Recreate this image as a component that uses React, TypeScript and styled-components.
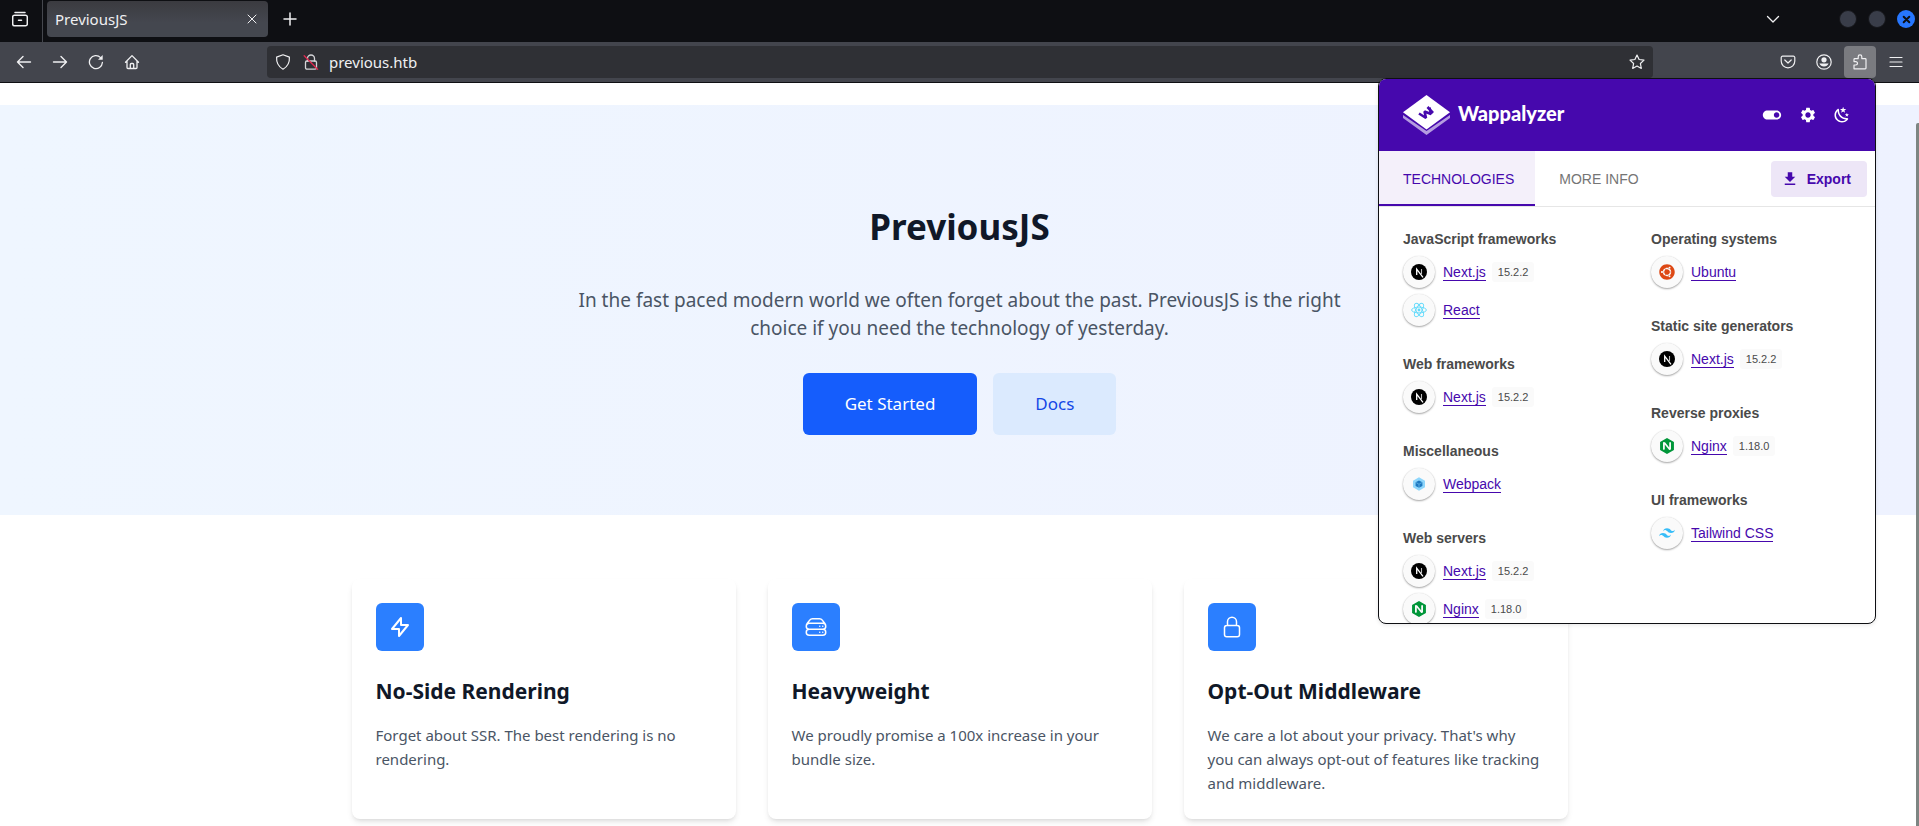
import React from "react";
import styled, { createGlobalStyle } from "styled-components";
import { FaUbuntu } from "react-icons/fa";
import { SiNginx, SiTailwindcss } from "react-icons/si";
import { MdSettings, MdToggleOn } from "react-icons/md";

const uiFont = `"Noto Sans", "Open Sans", sans-serif`;
const popupFont = `"Liberation Sans", Arial, sans-serif`;
const purple = "#4608ad";

const GlobalStyle = createGlobalStyle`
  *, *::before, *::after { box-sizing: border-box; }
  body { margin: 0; background: #fff; font-family: ${uiFont}; }
  h1, h2, h3, p, ul { margin: 0; padding: 0; }
  button, input { font: inherit; color: inherit; border: 0; background: none; padding: 0; margin: 0; }
  svg { display: block; flex: none; }
`;

const Window = styled.div`
  position: relative;
  display: flex;
  flex-direction: column;
  height: 100vh;
  overflow: hidden;
`;

/* ---- browser chrome ---- */

const TabStrip = styled.div`
  display: flex;
  align-items: center;
  flex: none;
  height: 42px;
  background: #0e0f13;
  color: #f0f0f2;
`;

const TabsOverview = styled.button`
  display: flex;
  align-items: center;
  justify-content: center;
  width: 43px;
  height: 42px;
  padding: 0 3px 4px 0;
  border-right: 1px solid #45474e;
`;

const BrowserTab = styled.div`
  display: flex;
  align-items: center;
  justify-content: space-between;
  width: 221px;
  height: 36px;
  margin: 0 6px 4px 4px;
  padding: 0 8px;
  border-radius: 4px;
  background: linear-gradient(#3b3b40, #44474f 60%);
  font-size: 15px;
`;

const IconButton = styled.button<{ $active?: boolean }>`
  display: flex;
  align-items: center;
  justify-content: center;
  width: 32px;
  height: 32px;
  border-radius: 4px;
  background: ${(p) => (p.$active ? "#7a7b80" : "none")};
`;

const NewTabButton = styled(IconButton)`
  margin-bottom: 4px;
`;

const SmallButton = styled.button`
  display: flex;
  align-items: center;
  justify-content: center;
  width: 16px;
  height: 16px;
`;

const WindowControls = styled.div`
  display: flex;
  align-items: center;
  gap: 11px;
  margin-left: auto;
  padding: 0 4px 4px 0;
`;

const TabList = styled(IconButton)`
  margin-right: 39px;
`;

const WindowDot = styled.button<{ $close?: boolean }>`
  display: flex;
  align-items: center;
  justify-content: center;
  width: 18px;
  height: 18px;
  border-radius: 50%;
  border: ${(p) => (p.$close ? "0" : "1px solid #16171b")};
  background: ${(p) => (p.$close ? "#2777ff" : "#393d49")};
  color: #0e0f13;
`;

const Toolbar = styled.div`
  display: flex;
  align-items: center;
  flex: none;
  height: 41px;
  padding: 0 7px 0 8px;
  border-bottom: 1px solid #0e0f13;
  background: #43454d;
  color: #f0f0f2;
`;

const NavGroup = styled.div`
  display: flex;
  gap: 4px;
`;

const UrlBar = styled.div`
  display: flex;
  align-items: center;
  flex: 1;
  height: 32px;
  margin: 0 119px;
  padding: 0 8px;
  border-radius: 4px;
  background: #2f3035;
`;

const Badges = styled.div`
  display: flex;
  gap: 12px;
  margin-right: 10px;
`;

const UrlInput = styled.input`
  flex: 1;
  min-width: 0;
  font-size: 15px;
  outline: none;
`;

/* ---- web page ---- */

const Page = styled.main`
  position: relative;
  flex: 1;
  min-height: 0;
  overflow: hidden;
  padding-top: 22px;
  background: #fff;
`;

const PageScrollbar = styled.div`
  position: absolute;
  top: 40px;
  right: 0;
  bottom: 0;
  width: 3px;
  border-radius: 2px 0 0 0;
  background: #7d8582;
`;

const Hero = styled.section`
  display: flex;
  flex-direction: column;
  align-items: center;
  padding: 104px 16px 80px;
  background: linear-gradient(to right, #eff6ff, #eef2ff);
  text-align: center;
`;

const HeroTitle = styled.h1`
  font-size: 35px;
  line-height: 36px;
  font-weight: 700;
  color: #101828;
`;

const HeroText = styled.p`
  max-width: 768px;
  margin: 41px 0 31px;
  font-size: 19px;
  line-height: 28px;
  color: #4a5565;
`;

const HeroActions = styled.div`
  display: flex;
  gap: 16px;
`;

const HeroButton = styled.a<{ $primary?: boolean }>`
  padding: 17px 42px;
  border-radius: 6px;
  background: ${(p) => (p.$primary ? "#155dfc" : "#dbeafe")};
  color: ${(p) => (p.$primary ? "#fff" : "#1447e6")};
  font-size: 17px;
  line-height: 28px;
  text-decoration: none;
`;

const Features = styled.section`
  display: grid;
  grid-template-columns: repeat(3, 1fr);
  gap: 32px;
  max-width: 1216px;
  margin: 0 auto;
  padding: 64px 0;
`;

const Card = styled.article`
  padding: 24px;
  border-radius: 8px;
  background: #fff;
  box-shadow: 0 4px 6px -1px rgba(0, 0, 0, 0.1), 0 2px 4px -2px rgba(0, 0, 0, 0.1);
`;

const CardIcon = styled.div`
  display: flex;
  align-items: center;
  justify-content: center;
  width: 48px;
  height: 48px;
  margin-bottom: 24px;
  border-radius: 6px;
  background: #2b7fff;
  color: #fff;
`;

const CardTitle = styled.h2`
  margin-bottom: 16px;
  font-size: 21px;
  line-height: 32px;
  font-weight: 700;
  color: #101828;
`;

const CardText = styled.p`
  font-size: 15px;
  line-height: 24px;
  color: #4a5565;
`;

/* ---- Wappalyzer popup ---- */

const Popup = styled.aside`
  position: absolute;
  top: 78px;
  right: 43px;
  display: flex;
  flex-direction: column;
  width: 498px;
  height: 546px;
  overflow: hidden;
  border: 1px solid #0e0f13;
  border-radius: 8px;
  background: #fff;
  box-shadow: 0 1px 4px rgba(0, 0, 0, 0.1);
  font-family: ${popupFont};
`;

const PopupHeader = styled.header`
  display: flex;
  align-items: center;
  justify-content: space-between;
  flex: none;
  height: 72px;
  padding: 0 24px;
  background: ${purple};
  color: #fff;
`;

const Brand = styled.div`
  display: flex;
  align-items: center;
  gap: 8px;
`;

const BrandName = styled.span`
  padding-bottom: 4px;
  font-family: Lato, sans-serif;
  font-size: 20px;
  line-height: 24px;
  font-weight: 900;
`;

const HeaderActions = styled.div`
  display: flex;
  gap: 16px;
`;

const HeaderButton = styled.button`
  display: flex;
  align-items: center;
  justify-content: center;
  min-width: 16px;
  height: 22px;
`;

const PopupTabs = styled.div`
  display: flex;
  flex: none;
  height: 56px;
  padding-right: 8px;
  border-bottom: 1px solid #e6e6e6;
`;

const PopupTab = styled.button<{ $active?: boolean }>`
  padding: 2px 21px 0 24px;
  border-bottom: 2px solid ${(p) => (p.$active ? purple : "transparent")};
  background: ${(p) => (p.$active ? "#f4f0fa" : "none")};
  color: ${(p) => (p.$active ? purple : "#757575")};
  font-size: 14px;
`;

const ExportButton = styled.button`
  display: flex;
  align-items: center;
  gap: 8px;
  height: 36px;
  margin: 10px 0 0 auto;
  padding: 0 16px 0 10px;
  border-radius: 4px;
  background: #ede6f7;
  color: ${purple};
  font-size: 14px;
  font-weight: 700;
`;

const TechColumns = styled.div`
  display: grid;
  grid-template-columns: 1fr 1fr;
  padding-top: 20px;
`;

const TechColumn = styled.div`
  display: flex;
  flex-direction: column;
  gap: 23px;
  padding-left: 24px;
`;

const Category = styled.h3`
  margin-bottom: 2px;
  font-size: 14px;
  line-height: 24px;
  font-weight: 700;
  color: #4a4a4a;
`;

const TechRow = styled.div`
  display: flex;
  align-items: center;
  height: 38px;
`;

const TechIcon = styled.span`
  display: flex;
  align-items: center;
  justify-content: center;
  width: 32px;
  height: 32px;
  margin-right: 8px;
  border-radius: 50%;
  background: #fafafa;
  box-shadow: 0 1px 2px rgba(0, 0, 0, 0.35), 0 0 1px rgba(0, 0, 0, 0.12);
`;

const TechLink = styled.a`
  border-bottom: 1px solid ${purple};
  color: ${purple};
  font-size: 14px;
  line-height: 16px;
  text-decoration: none;
`;

const Version = styled.span`
  margin-left: 6px;
  padding: 0 6px;
  border-radius: 3px;
  background: #fafafa;
  color: #4a4a4a;
  font-size: 11px;
  line-height: 20px;
`;

/* ---- icons ---- */

const Line = ({ d, size = 16, width = 1.2, box = 16 }: { d: string; size?: number; width?: number; box?: number }) => (
  <svg width={size} height={size} viewBox={`0 0 ${box} ${box}`} fill="none" stroke="currentColor" strokeWidth={width} strokeLinecap="round" strokeLinejoin="round">
    <path d={d} />
  </svg>
);

const icons = {
  overview: "M3 1.5h10M2.5 4.2h11a1.8 1.8 0 0 1 1.8 1.8v7a1.8 1.8 0 0 1-1.8 1.8h-11A1.8 1.8 0 0 1 .7 13V6a1.8 1.8 0 0 1 1.8-1.8zM6.5 9.2h3",
  close: "M4 4l8 8M12 4l-8 8",
  plus: "M8 2v12M2 8h12",
  chevron: "M2.5 5.5L8 11l5.5-5.5",
  back: "M14.5 8h-13M7 2.5L1.5 8 7 13.5",
  forward: "M1.5 8h13M9 2.5L14.5 8 9 13.5",
  home: "M1.5 8.2L8 1.6l6.5 6.6M3 7v6.5a1 1 0 0 0 1 1h8a1 1 0 0 0 1-1V7M6.3 14.5v-4a1 1 0 0 1 1-1h1.4a1 1 0 0 1 1 1v4",
  shield: "M8 .8l6.4 2.3c.3 4.5-.9 9-6.4 12.1C2.5 12.1 1.3 7.6 1.6 3.1z",
  star: "M8 1l2.1 4.5 4.9.6-3.6 3.4.9 4.9L8 12l-4.3 2.4.9-4.9L1 6.1l4.9-.6z",
  pocket: "M2.6 2.2h10.8a1.4 1.4 0 0 1 1.4 1.4V7a6.8 6.8 0 0 1-13.6 0V3.6a1.4 1.4 0 0 1 1.4-1.4zM4.8 6L8 9l3.2-3",
  puzzle: "M2 14.8V11h1.8a1.7 1.7 0 0 0 0-3.4H2V5.4a.8.8 0 0 1 .8-.8h3.4V2.7a1.8 1.8 0 0 1 3.6 0v1.9h3.4a.8.8 0 0 1 .8.8v8.6a.8.8 0 0 1-.8.8z",
  menu: "M2 3.5h12M2 8h12M2 12.5h12",
};

const ReloadIcon = () => (
  <svg width="16" height="16" viewBox="0 0 16 16" fill="none" stroke="currentColor" strokeWidth="1.3" strokeLinecap="round">
    <path d="M14.4 8.5A6.5 6.5 0 1 1 12.6 3.6" />
    <path d="M10 5.8h4.7V1z" fill="currentColor" stroke="none" />
  </svg>
);

const InsecureLockIcon = () => (
  <svg width="16" height="16" viewBox="0 0 16 16" fill="none" strokeWidth="1.3" strokeLinecap="round">
    <rect x="2.5" y="7" width="11" height="8.2" rx="1.4" stroke="#d5d5d8" />
    <path d="M4.5 7V4.5a3.5 3.5 0 0 1 7 0V7" stroke="#d5d5d8" />
    <path d="M1.2 1.8L14.6 15.2" stroke="#e22850" />
  </svg>
);

const AccountIcon = () => (
  <svg width="16" height="16" viewBox="0 0 16 16" fill="none">
    <circle cx="8" cy="8" r="7.2" stroke="currentColor" strokeWidth="1.2" />
    <circle cx="8" cy="5.8" r="2.6" fill="currentColor" />
    <path d="M3.4 9.4h9.2a5 5 0 0 1-9.2 0z" fill="currentColor" />
  </svg>
);

const WappalyzerLogo = () => (
  <svg width="47" height="40" viewBox="0 0 47 40">
    <path d="M0 20v3l23.5 17L47 23v-3L23.5 36z" fill="#b59ce0" />
    <path d="M23.5 0L47 17.3 23.5 34.6 0 17.3z" fill="#fff" />
    <path d="M16 18.5l7 4.5-1.5-6.5 6.5 2.5-1.5-6.5M24.5 12l5.5 6" fill="none" stroke={purple} strokeWidth="2.6" strokeLinejoin="bevel" />
  </svg>
);

const MoonIcon = () => (
  <svg width="18" height="18" viewBox="0 0 24 24" fill="currentColor">
    <path d="M17.75,4.09L15.22,6.03L16.13,9.09L13.5,7.28L10.87,9.09L11.78,6.03L9.25,4.09L12.44,4L13.5,1L14.56,4L17.75,4.09M21.25,11L19.61,12.25L20.2,14.23L18.5,13.06L16.8,14.23L17.39,12.25L15.75,11L17.81,10.95L18.5,9L19.19,10.95L21.25,11M18.97,15.95C19.8,15.87 20.69,17.05 20.16,17.8C19.84,18.25 19.5,18.67 19.08,19.07C15.17,23 8.84,23 4.94,19.07C1.03,15.17 1.03,8.83 4.94,4.93C5.34,4.53 5.76,4.17 6.21,3.85C6.96,3.32 8.14,4.21 8.06,5.04C7.79,7.9 8.75,10.87 10.95,13.06C13.14,15.26 16.1,16.22 18.97,15.95M17.33,17.97C14.5,17.81 11.7,16.64 9.53,14.5C7.36,12.31 6.2,9.5 6.04,6.68C3.23,9.82 3.34,14.64 6.35,17.66C9.37,20.67 14.19,20.78 17.33,17.97Z" />
  </svg>
);

const DownloadIcon = () => (
  <svg width="18" height="18" viewBox="0 0 24 24" fill="currentColor">
    <path d="M5,20H19V18H5M19,9H15V3H9V9H5L12,16L19,9Z" />
  </svg>
);

const NextIcon = () => (
  <svg width="16" height="16" viewBox="0 0 16 16">
    <circle cx="8" cy="8" r="8" fill="#000" />
    <path d="M5.7 11V5.2l6.3 8.2" fill="none" stroke="#fff" strokeWidth="1.3" />
    <path d="M10.5 5v5" stroke="#bbb" strokeWidth="1.1" />
  </svg>
);

const ReactIcon = () => (
  <svg width="16" height="16" viewBox="0 0 16 16" fill="none" stroke="#61dafb" strokeWidth="0.9">
    <ellipse cx="8" cy="8" rx="7.4" ry="2.9" />
    <ellipse cx="8" cy="8" rx="7.4" ry="2.9" transform="rotate(60 8 8)" />
    <ellipse cx="8" cy="8" rx="7.4" ry="2.9" transform="rotate(120 8 8)" />
    <circle cx="8" cy="8" r="1.4" fill="#61dafb" stroke="none" />
  </svg>
);

const WebpackIcon = () => (
  <svg width="16" height="16" viewBox="0 0 16 16">
    <path d="M8 1.3l6 3.4v6.6l-6 3.4-6-3.4V4.7z" fill="#8ed6fb" />
    <path d="M8 4.4l3.4 1.9v3.6L8 11.8 4.6 9.9V6.3z" fill="#1c78c0" />
    <path d="M4.6 6.3L8 8.2l3.4-1.9M8 8.2v3.6" fill="none" stroke="#8ed6fb" strokeWidth="0.5" />
  </svg>
);

const bolt = "M13 10V3L4 14h7v7l9-11h-7z";
const serverStack =
  "M5.25 14.25h13.5m-13.5 0a3 3 0 01-3-3m3 3a3 3 0 100 6h13.5a3 3 0 100-6m-16.5-3a3 3 0 013-3h13.5a3 3 0 013 3m-19.5 0a4.5 4.5 0 01.9-2.7L5.737 5.1a3.375 3.375 0 012.7-1.35h7.126c1.062 0 2.062.5 2.7 1.35l2.587 3.45a4.5 4.5 0 01.9 2.7m0 0a3 3 0 01-3 3m0 3h.008v.008h-.008v-.008zm0-6h.008v.008h-.008v-.008zm-3 6h.008v.008h-.008v-.008zm0-6h.008v.008h-.008v-.008z";
const lockClosed =
  "M16.5 10.5V6.75a4.5 4.5 0 10-9 0v3.75m-.75 11.25h10.5a2.25 2.25 0 002.25-2.25v-6.75a2.25 2.25 0 00-2.25-2.25H6.75a2.25 2.25 0 00-2.25 2.25v6.75a2.25 2.25 0 002.25 2.25z";

/* ---- data ---- */

const features = [
  { icon: bolt, stroke: 2, title: "No-Side Rendering", text: "Forget about SSR. The best rendering is no rendering." },
  { icon: serverStack, stroke: 1.5, title: "Heavyweight", text: "We proudly promise a 100x increase in your bundle size." },
  {
    icon: lockClosed,
    stroke: 1.5,
    title: "Opt-Out Middleware",
    text: "We care a lot about your privacy. That's why you can always opt-out of features like tracking and middleware.",
  },
];

type Tech = { name: string; icon: React.ReactNode; version?: string };

const next: Tech = { name: "Next.js", icon: <NextIcon />, version: "15.2.2" };
const nginx: Tech = { name: "Nginx", icon: <SiNginx size={16} color="#009639" />, version: "1.18.0" };

const columns: { category: string; items: Tech[] }[][] = [
  [
    { category: "JavaScript frameworks", items: [next, { name: "React", icon: <ReactIcon /> }] },
    { category: "Web frameworks", items: [next] },
    { category: "Miscellaneous", items: [{ name: "Webpack", icon: <WebpackIcon /> }] },
    { category: "Web servers", items: [next, nginx] },
  ],
  [
    { category: "Operating systems", items: [{ name: "Ubuntu", icon: <FaUbuntu size={16} color="#dd4814" /> }] },
    { category: "Static site generators", items: [next] },
    { category: "Reverse proxies", items: [nginx] },
    { category: "UI frameworks", items: [{ name: "Tailwind CSS", icon: <SiTailwindcss size={16} color="#38bdf8" /> }] },
  ],
];

export default function App() {
  return (
    <Window>
      <GlobalStyle />
      <TabStrip>
        <TabsOverview aria-label="View tabs"><Line d={icons.overview} width={1.5} /></TabsOverview>
        <BrowserTab>
          <span>PreviousJS</span>
          <SmallButton aria-label="Close tab"><Line d={icons.close} size={16} width={1} /></SmallButton>
        </BrowserTab>
        <NewTabButton aria-label="New tab"><Line d={icons.plus} width={1.5} /></NewTabButton>
        <WindowControls>
          <TabList aria-label="List all tabs"><Line d={icons.chevron} width={1.3} /></TabList>
          <WindowDot aria-label="Minimize" />
          <WindowDot aria-label="Maximize" />
          <WindowDot $close aria-label="Close window"><Line d="M3 3l10 10M13 3L3 13" size={9} width={3.5} /></WindowDot>
        </WindowControls>
      </TabStrip>
      <Toolbar>
        <NavGroup>
          <IconButton aria-label="Back"><Line d={icons.back} width={1.4} /></IconButton>
          <IconButton aria-label="Forward"><Line d={icons.forward} width={1.4} /></IconButton>
          <IconButton aria-label="Reload"><ReloadIcon /></IconButton>
          <IconButton aria-label="Home"><Line d={icons.home} width={1.3} /></IconButton>
        </NavGroup>
        <UrlBar>
          <Badges>
            <Line d={icons.shield} />
            <InsecureLockIcon />
          </Badges>
          <UrlInput aria-label="Address" defaultValue="previous.htb" />
          <SmallButton aria-label="Bookmark"><Line d={icons.star} /></SmallButton>
        </UrlBar>
        <NavGroup>
          <IconButton aria-label="Pocket"><Line d={icons.pocket} /></IconButton>
          <IconButton aria-label="Account"><AccountIcon /></IconButton>
          <IconButton $active aria-label="Extensions"><Line d={icons.puzzle} /></IconButton>
          <IconButton aria-label="Menu"><Line d={icons.menu} /></IconButton>
        </NavGroup>
      </Toolbar>

      <Page>
        <Hero>
          <HeroTitle>PreviousJS</HeroTitle>
          <HeroText>
            In the fast paced modern world we often forget about the past. PreviousJS is the right choice if you need the
            technology of yesterday.
          </HeroText>
          <HeroActions>
            <HeroButton $primary href="#start">Get Started</HeroButton>
            <HeroButton href="#docs">Docs</HeroButton>
          </HeroActions>
        </Hero>
        <Features>
          {features.map((f) => (
            <Card key={f.title}>
              <CardIcon><Line d={f.icon} size={24} box={24} width={f.stroke} /></CardIcon>
              <CardTitle>{f.title}</CardTitle>
              <CardText>{f.text}</CardText>
            </Card>
          ))}
        </Features>
        <PageScrollbar />
      </Page>

      <Popup>
        <PopupHeader>
          <Brand><WappalyzerLogo /><BrandName>Wappalyzer</BrandName></Brand>
          <HeaderActions>
            <HeaderButton aria-label="Enable or disable"><MdToggleOn size={22} /></HeaderButton>
            <HeaderButton aria-label="Settings"><MdSettings size={18} /></HeaderButton>
            <HeaderButton aria-label="Dark mode"><MoonIcon /></HeaderButton>
          </HeaderActions>
        </PopupHeader>
        <PopupTabs>
          <PopupTab $active>TECHNOLOGIES</PopupTab>
          <PopupTab>MORE INFO</PopupTab>
          <ExportButton><DownloadIcon />Export</ExportButton>
        </PopupTabs>
        <TechColumns>
          {columns.map((groups, i) => (
            <TechColumn key={i}>
              {groups.map((g) => (
                <section key={g.category}>
                  <Category>{g.category}</Category>
                  {g.items.map((t) => (
                    <TechRow key={t.name}>
                      <TechIcon>{t.icon}</TechIcon>
                      <TechLink href={"#" + t.name}>{t.name}</TechLink>
                      {t.version && <Version>{t.version}</Version>}
                    </TechRow>
                  ))}
                </section>
              ))}
            </TechColumn>
          ))}
        </TechColumns>
      </Popup>
    </Window>
  );
}
